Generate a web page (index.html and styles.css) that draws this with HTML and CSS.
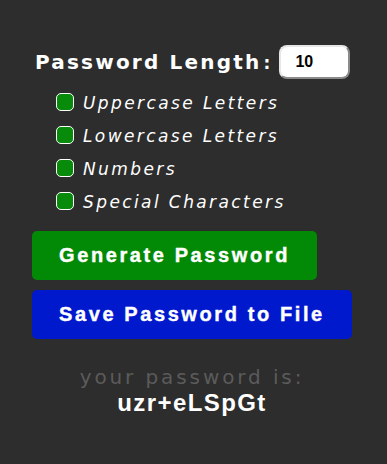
FILE: index.html
```html
<!DOCTYPE html>
<html lang="en">
<head>
<meta charset="utf-8">
<title>Password Generator</title>
<link rel="stylesheet" href="styles.css">
</head>
<body>
<main class="app">
  <div class="length-row">
    <label class="length-label" for="len">Password Length<span class="colon">:</span></label>
    <input class="length-input" id="len" type="text" value="10">
  </div>
  <ul class="options">
    <li class="option"><span class="box"></span><span class="option-text">Uppercase Letters</span></li>
    <li class="option"><span class="box"></span><span class="option-text">Lowercase Letters</span></li>
    <li class="option"><span class="box"></span><span class="option-text">Numbers</span></li>
    <li class="option"><span class="box"></span><span class="option-text">Special Characters</span></li>
  </ul>
  <div class="actions">
    <button class="btn btn-generate" type="button">Generate Password</button>
    <button class="btn btn-save" type="button">Save Password to File</button>
  </div>
  <div class="result">
    <p class="result-caption">your password is:</p>
    <p class="result-value">uzr+eLSpGt</p>
  </div>
</main>
</body>
</html>
```

FILE: styles.css
```css
html, body {
  margin: 0;
  padding: 0;
  background: #2d2d2d;
}
body {
  width: 387px;
  height: 464px;
  overflow: hidden;
}
.app {
  width: 320px;
  margin-left: 32px;
  padding-top: 45px;
  display: flex;
  flex-direction: column;
}
.length-row {
  display: flex;
  align-items: center;
  padding-left: 3px;
  height: 34px;
}
.length-label {
  font-family: "DejaVu Sans", Verdana, sans-serif;
  font-weight: bold;
  font-size: 20px;
  letter-spacing: 2.2px;
  color: #fff;
  white-space: nowrap;
}
.colon {
  margin-left: 2px;
  font-size: 17px;
}
.length-input {
  margin-left: 7px;
  box-sizing: border-box;
  width: 71px;
  height: 34px;
  flex: none;
  padding: 0 0 0 14px;
  border-style: solid;
  border-width: 2px;
  border-color: #e6e6e6 #8a8a8a #8a8a8a #e6e6e6;
  border-radius: 8px;
  background: #fff;
  font-family: "Liberation Sans", Arial, sans-serif;
  font-weight: bold;
  font-size: 16px;
  color: #000;
  outline: none;
}
.options {
  list-style: none;
  margin: 7px 0 0 0;
  padding: 0 0 0 24px;
  display: flex;
  flex-direction: column;
}
.option {
  height: 33px;
  display: flex;
  align-items: center;
  gap: 9px;
}
.box {
  box-sizing: border-box;
  width: 18px;
  height: 18px;
  border: 1.5px solid #fff;
  border-radius: 5px;
  background: #088a0a;
  flex: none;
  margin-top: -1px;
}
.option-text {
  font-family: "DejaVu Sans", Verdana, sans-serif;
  font-style: italic;
  font-size: 17px;
  letter-spacing: 2.4px;
  color: #fff;
}
.actions {
  margin-top: 13px;
  display: flex;
  flex-direction: column;
  align-items: flex-start;
  gap: 10px;
}
.btn {
  height: 49px;
  padding: 0 27px;
  border: none;
  border-radius: 5px;
  color: #fff;
  font-family: "Liberation Sans", Arial, sans-serif;
  font-weight: bold;
  font-size: 20px;
  letter-spacing: 2.6px;
  -webkit-text-stroke: 0.4px #fff;
  white-space: nowrap;
  flex: none;
  cursor: pointer;
}
.btn-generate {
  background: #028a06;
}
.btn-save {
  background: #0019cc;
}
.result {
  margin-top: 26px;
  text-align: center;
}
.result-caption {
  margin: 0;
  font-family: "DejaVu Sans", Verdana, sans-serif;
  font-size: 20px;
  letter-spacing: 2.9px;
  color: #5b5b5b;
}
.result-value {
  margin: 0;
  font-family: "Liberation Sans", Arial, sans-serif;
  font-weight: bold;
  font-size: 24px;
  letter-spacing: 1.4px;
  color: #fff;
}
```
